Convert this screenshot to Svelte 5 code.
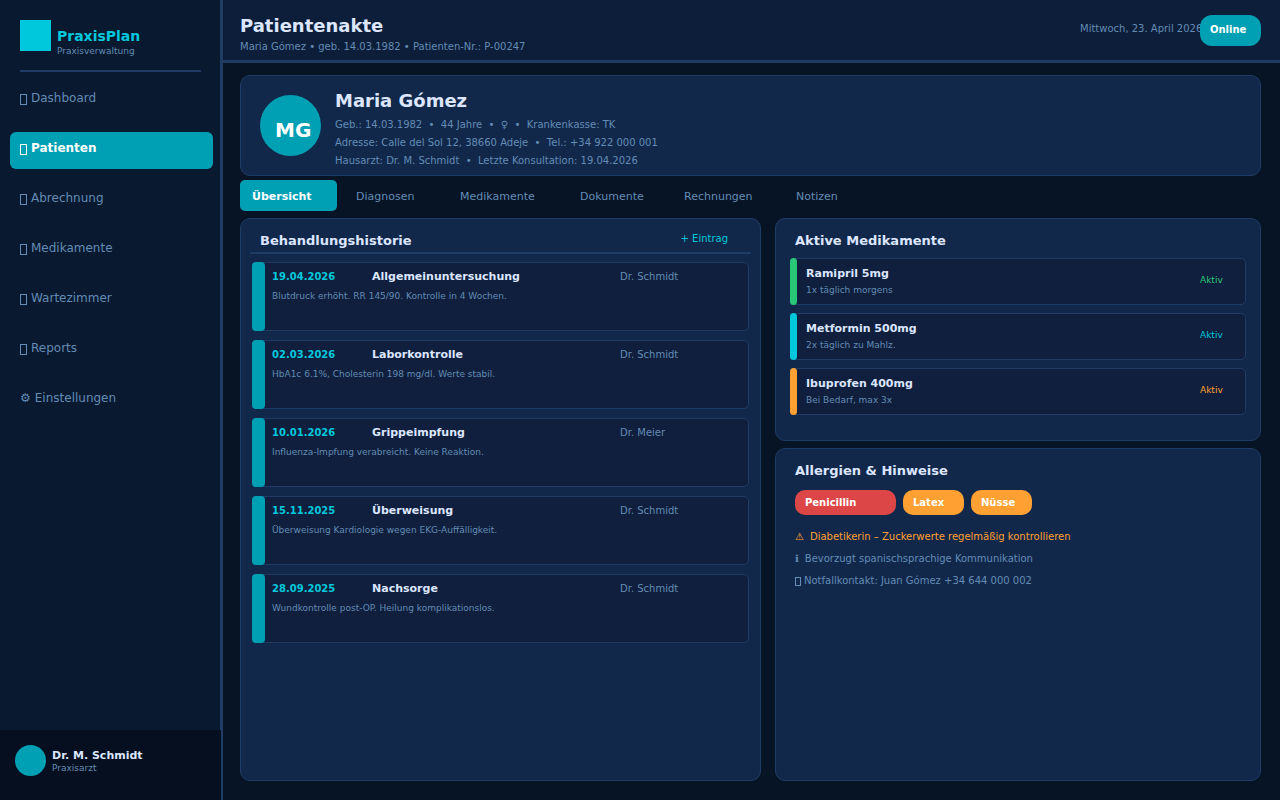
<script lang="ts">
  const navItems = [
    { label: 'Dashboard' },
    { label: 'Patienten' },
    { label: 'Abrechnung' },
    { label: 'Medikamente' },
    { label: 'Wartezimmer' },
    { label: 'Reports' },
    { label: 'Einstellungen', glyph: '⚙' },
  ];

  const tabs = ['Übersicht', 'Diagnosen', 'Medikamente', 'Dokumente', 'Rechnungen', 'Notizen'];

  const history = [
    { date: '19.04.2026', title: 'Allgemeinuntersuchung', doctor: 'Dr. Schmidt', note: 'Blutdruck erhöht. RR 145/90. Kontrolle in 4 Wochen.' },
    { date: '02.03.2026', title: 'Laborkontrolle', doctor: 'Dr. Schmidt', note: 'HbA1c 6.1%, Cholesterin 198 mg/dl. Werte stabil.' },
    { date: '10.01.2026', title: 'Grippeimpfung', doctor: 'Dr. Meier', note: 'Influenza-Impfung verabreicht. Keine Reaktion.' },
    { date: '15.11.2025', title: 'Überweisung', doctor: 'Dr. Schmidt', note: 'Überweisung Kardiologie wegen EKG-Auffälligkeit.' },
    { date: '28.09.2025', title: 'Nachsorge', doctor: 'Dr. Schmidt', note: 'Wundkontrolle post-OP. Heilung komplikationslos.' },
  ];

  const meds = [
    { name: 'Ramipril 5mg', dose: '1x täglich morgens', tone: 'green' },
    { name: 'Metformin 500mg', dose: '2x täglich zu Mahlz.', tone: 'cyan' },
    { name: 'Ibuprofen 400mg', dose: 'Bei Bedarf, max 3x', tone: 'orange' },
  ];

  const allergies = [
    { name: 'Penicillin', severe: true },
    { name: 'Latex', severe: false },
    { name: 'Nüsse', severe: false },
  ];

  let activeNav = $state('Patienten');
  let activeTab = $state('Übersicht');

  // tabs and pills grow by 8px per character
  const widthFor = (text: string, pad: number) => text.length * 8 + pad;
</script>

<div class="app">
  <aside class="sidebar">
    <div class="brand">
      <span class="logo"></span>
      <div>
        <strong class="brand-name">PraxisPlan</strong>
        <span class="brand-sub">Praxisverwaltung</span>
      </div>
    </div>

    <nav>
      {#each navItems as item (item.label)}
        <button class="nav-item" class:active={activeNav === item.label} onclick={() => (activeNav = item.label)}>
          {#if item.glyph}
            <span>{item.glyph}</span>
          {:else}
            <svg class="box" width="7" height="11" viewBox="0 0 7 11" aria-hidden="true">
              <rect x="0.5" y="0.5" width="6" height="10" />
            </svg>
          {/if}
          <span>{item.label}</span>
        </button>
      {/each}
    </nav>

    <div class="user">
      <span class="user-avatar"></span>
      <div>
        <strong class="user-name">Dr. M. Schmidt</strong>
        <span class="user-role">Praxisarzt</span>
      </div>
    </div>
  </aside>

  <div class="page">
    <header class="topbar">
      <div class="heading">
        <h1>Patientenakte</h1>
        <p>Maria Gómez • geb. 14.03.1982 • Patienten-Nr.: P-00247</p>
      </div>
      <span class="date">Mittwoch, 23. April 2026</span>
      <span class="online">Online</span>
    </header>

    <main>
      <section class="card patient">
        <div class="avatar">MG</div>
        <div class="details">
          <h2>Maria Gómez</h2>
          <p>Geb.: 14.03.1982  •  44 Jahre  •  ♀  •  Krankenkasse: TK</p>
          <p>Adresse: Calle del Sol 12, 38660 Adeje  •  Tel.: +34 922 000 001</p>
          <p>Hausarzt: Dr. M. Schmidt  •  Letzte Konsultation: 19.04.2026</p>
        </div>
      </section>

      <div class="tabs" role="tablist">
        {#each tabs as tab (tab)}
          <button
            role="tab"
            aria-selected={activeTab === tab}
            class="tab"
            class:active={activeTab === tab}
            style:width="{widthFor(tab, 25)}px"
            onclick={() => (activeTab = tab)}>{tab}</button
          >
        {/each}
      </div>

      <div class="columns">
        <section class="card history">
          <div class="history-head">
            <h3>Behandlungshistorie</h3>
            <button class="add">+ Eintrag</button>
          </div>
          <ul>
            {#each history as entry (entry.date)}
              <li class="entry">
                <div class="entry-row">
                  <time>{entry.date}</time>
                  <strong>{entry.title}</strong>
                  <span class="doctor">{entry.doctor}</span>
                </div>
                <p>{entry.note}</p>
              </li>
            {/each}
          </ul>
        </section>

        <div class="side">
          <section class="card meds">
            <h3>Aktive Medikamente</h3>
            <ul>
              {#each meds as med (med.name)}
                <li class="med {med.tone}">
                  <div>
                    <strong>{med.name}</strong>
                    <p>{med.dose}</p>
                  </div>
                  <span class="status">Aktiv</span>
                </li>
              {/each}
            </ul>
          </section>

          <section class="card allergies">
            <h3>Allergien &amp; Hinweise</h3>
            <div class="pills">
              {#each allergies as allergy (allergy.name)}
                <span class="pill" class:severe={allergy.severe} style:width="{widthFor(allergy.name, 21)}px">
                  {allergy.name}
                </span>
              {/each}
            </div>
            <p class="note warn"><span>⚠</span><span>Diabetikerin – Zuckerwerte regelmäßig kontrollieren</span></p>
            <p class="note"><span>ℹ</span><span>Bevorzugt spanischsprachige Kommunikation</span></p>
            <p class="note contact">
              <svg class="box" width="6" height="9" viewBox="0 0 6 9" aria-hidden="true">
                <rect x="0.5" y="0.5" width="5" height="8" />
              </svg>
              <span>Notfallkontakt: Juan Gómez +34 644 000 002</span>
            </p>
          </section>
        </div>
      </div>
    </main>
  </div>
</div>

<style>
  :global(body) {
    margin: 0;
    background: #061426;
  }

  .app {
    --line: #1e3c64;
    --card: #12284b;
    --inset: #0f1f3d;
    --teal: #00a0b4;
    --cyan: #00c8dc;
    --text: #dce6ff;
    --muted: #648cb4;
    --green: #28c878;
    --orange: #ffa032;
    --red: #dc4646;
    display: flex;
    min-height: 100vh;
    background: #061426;
    color: var(--text);
    font-family: 'DejaVu Sans', sans-serif;
    font-size: 10px;
  }

  .app * {
    box-sizing: border-box;
  }

  h1, h2, h3, p, ul {
    margin: 0;
    padding: 0;
    list-style: none;
  }

  button {
    border: 0;
    padding: 0;
    background: none;
    color: inherit;
    font: inherit;
    text-align: left;
    cursor: pointer;
  }

  .box {
    flex: none;
    fill: none;
    stroke: currentColor;
  }

  /* sidebar */
  .sidebar {
    display: flex;
    flex-direction: column;
    flex: none;
    width: 223px;
    background: #081930;
    border-right: 3px solid var(--line);
  }

  .brand {
    display: flex;
    gap: 6px;
    margin: 0 19px 0 20px;
    padding: 20px 0 19px;
    border-bottom: 2px solid var(--line);
  }

  .logo {
    width: 31px;
    height: 31px;
    background: var(--cyan);
  }

  .brand-name {
    display: block;
    padding-top: 7px;
    color: var(--cyan);
    font-size: 14px;
    line-height: 18px;
  }

  .brand-sub {
    display: block;
    color: var(--muted);
    font-size: 9px;
    line-height: 12px;
    margin-bottom: -6px;
  }

  nav {
    display: flex;
    flex-direction: column;
    gap: 13px;
    padding: 10px 7px 10px 10px;
  }

  .nav-item {
    display: flex;
    align-items: center;
    gap: 4px;
    height: 37px;
    padding: 0 10px 5px;
    border-radius: 6px;
    color: var(--muted);
    font-size: 12px;
  }

  .nav-item .box {
    margin-top: 2px;
  }

  .nav-item.active {
    background: var(--teal);
    color: #fff;
    font-weight: bold;
  }

  .user {
    display: flex;
    gap: 6px;
    height: 70px;
    margin: auto -1px 0 0;
    padding: 15px;
    background: #050f20;
  }

  .user-avatar {
    width: 31px;
    height: 31px;
    border-radius: 50%;
    background: var(--teal);
  }

  .user-name {
    display: block;
    padding-top: 3px;
    font-size: 11px;
    line-height: 16px;
  }

  .user-role {
    display: block;
    color: var(--muted);
    font-size: 9px;
    line-height: 8px;
  }

  /* top bar */
  .page {
    display: flex;
    flex-direction: column;
    flex: 1;
    min-width: 0;
  }

  .topbar {
    display: flex;
    height: 63px;
    padding: 15px 19px 0 17px;
    background: #0d1e3a;
    border-bottom: 3px solid var(--line);
  }

  .heading {
    flex: 1;
  }

  h1, h2 {
    font-size: 18px;
    line-height: 22px;
    margin-bottom: 3px;
  }

  .heading p {
    color: var(--muted);
    line-height: 14px;
  }

  .date {
    width: 120px;
    color: var(--muted);
    line-height: 28px;
    white-space: nowrap;
  }

  .online {
    position: relative;
    width: 61px;
    height: 31px;
    padding-left: 10px;
    border-radius: 12px;
    background: var(--teal);
    color: #fff;
    font-weight: bold;
    line-height: 30px;
  }

  main {
    display: flex;
    flex-direction: column;
    flex: 1;
    padding: 12px 19px 19px 17px;
  }

  .card {
    background: var(--card);
    border: 1px solid var(--line);
    border-radius: 10px;
  }

  /* patient */
  .patient {
    display: flex;
    gap: 14px;
    padding: 14px 19px 5px;
  }

  .avatar {
    display: flex;
    align-items: center;
    flex: none;
    width: 61px;
    height: 61px;
    margin-top: 5px;
    padding: 8px 0 0 15px;
    border-radius: 50%;
    background: var(--teal);
    color: #fff;
    font-size: 20px;
    font-weight: bold;
  }

  .details h2 {
    margin-bottom: 4px;
  }

  .details p {
    color: var(--muted);
    line-height: 18px;
    white-space: pre-wrap;
  }

  .tabs {
    display: flex;
    gap: 7px;
    padding: 4px 0 7px;
  }

  .tab {
    height: 31px;
    padding: 2px 0 0 12px;
    border-radius: 5px;
    color: var(--muted);
    font-size: 11px;
  }

  .tab.active {
    background: var(--teal);
    color: #fff;
    font-weight: bold;
  }

  .columns {
    display: grid;
    grid-template-columns: 521fr 486fr;
    flex: 1;
    gap: 14px;
  }

  h3 {
    font-size: 13px;
    line-height: 18px;
  }

  /* history */
  .history {
    padding: 13px 9px;
  }

  .history-head {
    display: flex;
    justify-content: space-between;
    padding: 0 23px 2px 10px;
    border-bottom: 2px solid var(--line);
  }

  .add {
    height: 14px;
    color: var(--cyan);
    line-height: 14px;
  }

  ul {
    display: flex;
    flex-direction: column;
  }

  .history ul {
    gap: 9px;
    padding: 8px 2px 0;
  }

  .entry, .med {
    position: relative;
    background: var(--inset);
    border: 1px solid var(--line);
    border-radius: 5px;
  }

  .entry {
    min-height: 69px;
    padding: 6px 0 6px 19px;
  }

  /* coloured bar over the left border */
  .entry::before, .med::before {
    content: '';
    position: absolute;
    top: -1px;
    bottom: -1px;
    left: -1px;
    width: 13px;
    border-radius: 4px;
    background: var(--teal);
  }

  .entry-row {
    display: grid;
    grid-template-columns: 100px 1fr 128px;
    align-items: baseline;
    line-height: 16px;
  }

  time {
    color: var(--cyan);
    font-weight: bold;
  }

  .entry strong, .med strong {
    font-size: 11px;
  }

  .doctor {
    color: var(--muted);
  }

  .entry p, .med p {
    color: var(--muted);
    font-size: 9px;
    line-height: 14px;
  }

  .entry p {
    margin-top: 4px;
  }

  /* right column */
  .side {
    display: flex;
    flex-direction: column;
    gap: 7px;
  }

  .meds {
    padding: 13px 14px 25px;
  }

  .meds h3 {
    padding: 0 5px 8px;
  }

  .meds ul {
    gap: 8px;
  }

  .med {
    display: flex;
    align-items: center;
    justify-content: space-between;
    height: 47px;
    padding: 0 0 1px 15px;
  }

  .med::before {
    width: 7px;
    background: var(--tone);
  }

  .med strong {
    display: block;
    margin-bottom: 2px;
    line-height: 15px;
  }

  .status {
    width: 45px;
    padding-bottom: 3px;
    color: var(--tone);
    font-size: 9px;
  }

  .green {
    --tone: var(--green);
  }

  .cyan {
    --tone: var(--cyan);
  }

  .orange {
    --tone: var(--orange);
  }

  .allergies {
    flex: 1;
    padding: 13px 19px;
  }

  .pills {
    display: flex;
    gap: 7px;
    padding: 10px 0 11px;
  }

  .pill {
    height: 25px;
    padding-left: 10px;
    border-radius: 10px;
    background: var(--orange);
    color: #fff;
    font-weight: bold;
    line-height: 26px;
  }

  .pill.severe {
    background: var(--red);
  }

  .note {
    display: flex;
    align-items: center;
    gap: 6px;
    color: var(--muted);
    line-height: 22px;
  }

  .note.warn {
    color: var(--orange);
  }

  .note.contact {
    gap: 3px;
  }
</style>
